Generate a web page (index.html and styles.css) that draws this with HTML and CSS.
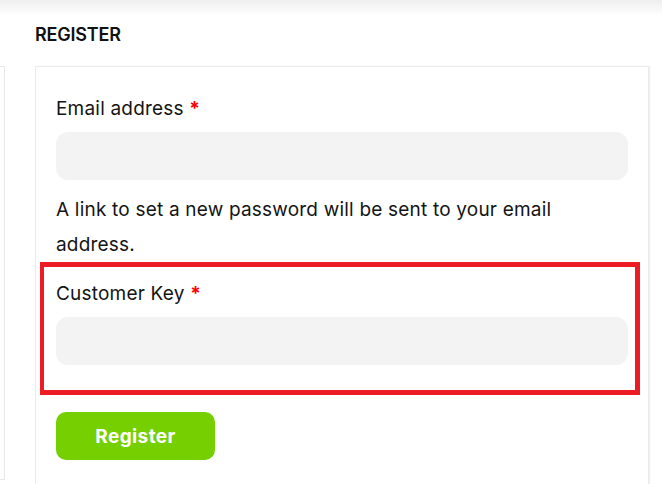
FILE: index.html
```html
<!DOCTYPE html>
<html lang="en">
<head>
<meta charset="utf-8">
<title>Register</title>
<link rel="stylesheet" href="styles.css">
</head>
<body>
<div class="topshade"></div>
<div class="layout">
  <aside class="side-panel"></aside>
  <main class="register">
    <h2 class="register-title">REGISTER</h2>
    <form class="register-box">
      <div class="field">
        <label class="field-label" for="email">Email address <span class="req">*</span></label>
        <input class="field-input" id="email" type="email">
      </div>
      <p class="note">A link to set a new password will be sent to your email address.</p>
      <div class="field field-highlight">
        <label class="field-label" for="key">Customer Key <span class="req">*</span></label>
        <input class="field-input" id="key" type="text">
      </div>
      <button class="btn" type="button">Register</button>
    </form>
  </main>
</div>
</body>
</html>
```

FILE: styles.css
```css
* { box-sizing: border-box; }
html, body { margin: 0; padding: 0; background: #fff; overflow: hidden; height: 484px; }
body {
  font-family: Inter, "Noto Sans", sans-serif;
  color: #141414;
}
.topshade {
  height: 16px;
  background: linear-gradient(#efefef, #fff);
}
.layout {
  display: grid;
  grid-template-columns: 5px 614px;
  column-gap: 30px;
}
.side-panel {
  margin-top: 50px;
  height: 414px;
  border: 1px solid #e8e8e8;
  border-left: none;
}
.register-title {
  margin: 9px 0 21px;
  font-size: 18px;
  line-height: 20px;
  font-weight: 600;
  letter-spacing: -0.2px;
  color: #111;
}
.register-box {
  border: 1px solid #ebebeb;
  box-shadow: 1px 0 1px #efefef;
  padding: 28px 20px 0;
  min-height: 440px;
  display: flex;
  flex-direction: column;
  align-items: flex-start;
}
.field {
  display: flex;
  flex-direction: column;
  width: 100%;
}
.field-label {
  font-size: 19px;
  line-height: 27px;
  letter-spacing: 0.2px;
  margin-bottom: 10px;
  color: #141414;
}
.req { color: #f00; font-weight: 700; }
.field-input {
  height: 48px;
  border: none;
  border-radius: 12px;
  background: #f3f3f3;
  width: 100%;
  outline: none;
}
.note {
  margin: 12px 0 0;
  font-size: 19px;
  line-height: 35px;
  letter-spacing: 0.2px;
  padding-right: 40px;
}
.field-highlight {
  width: auto;
  align-self: stretch;
  margin: 0 -12px 0 -16px;
  border: 5px solid #ed1c24;
  border-left-width: 4px;
  padding: 13px 7px 25px 12px;
}
.btn {
  margin-top: 17px;
  width: 159px;
  height: 48px;
  border: none;
  border-radius: 10px;
  background: #76cf00;
  color: #fff;
  font-family: Inter, "Noto Sans", sans-serif;
  font-size: 19px;
  font-weight: 700;
  letter-spacing: 0.4px;
}
```
